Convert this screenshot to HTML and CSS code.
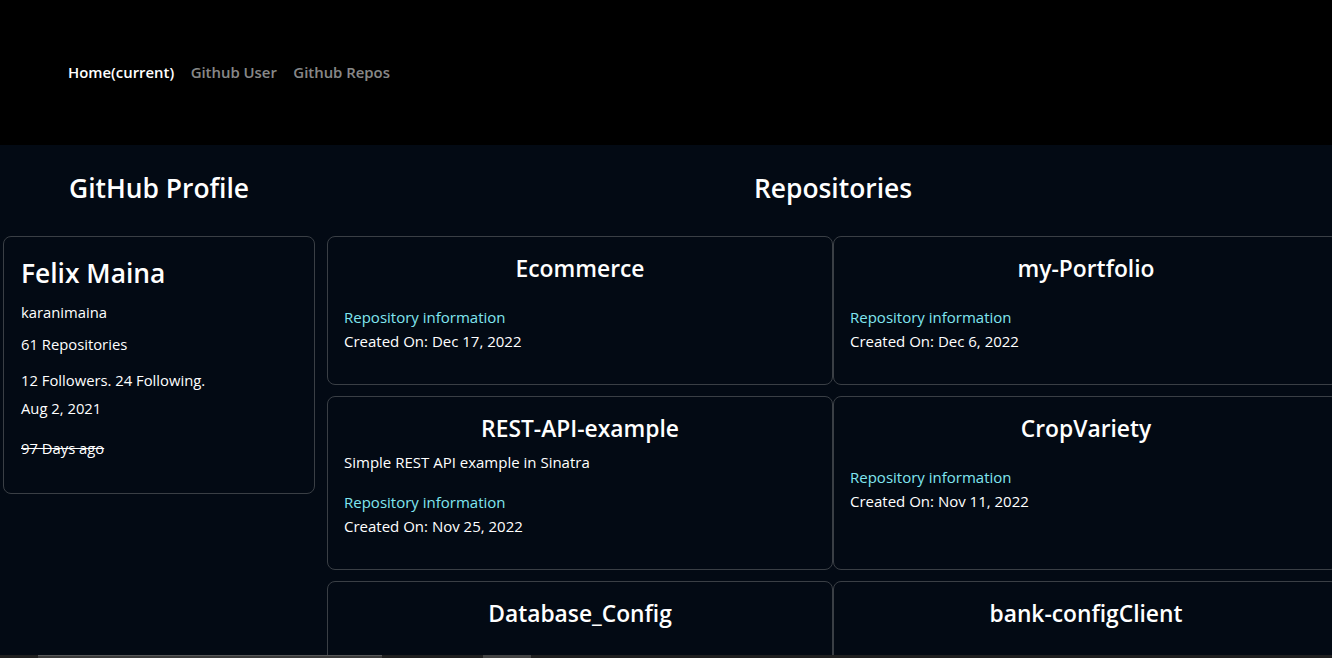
FILE: index.html
```html
<!DOCTYPE html>
<html lang="en">
<head>
<meta charset="utf-8">
<title>GitHub Profile</title>
<link rel="stylesheet" href="styles.css">
</head>
<body>
<header class="topbar">
  <nav class="nav">
    <a class="nav-link active" href="#">Home(current)</a>
    <a class="nav-link" href="#">Github User</a>
    <a class="nav-link" href="#">Github Repos</a>
  </nav>
</header>
<main class="content">
  <section class="profile-col">
    <h2 class="section-title">GitHub Profile</h2>
    <div class="card profile-card">
      <h3 class="name">Felix Maina</h3>
      <p class="p-line p-user">karanimaina</p>
      <p class="p-line p-repos">61 Repositories</p>
      <p class="p-line p-follow">12 Followers. 24 Following.</p>
      <p class="p-line p-date">Aug 2, 2021</p>
      <p class="p-line p-ago">97 Days ago</p>
    </div>
  </section>
  <section class="repos-col">
    <h2 class="section-title">Repositories</h2>
    <div class="repo-grid">
      <div class="card repo-card">
        <h3 class="repo-title">Ecommerce</h3>
        <p class="desc"></p>
        <a class="info" href="#">Repository information</a>
        <p class="created">Created On: Dec 17, 2022</p>
      </div>
      <div class="card repo-card">
        <h3 class="repo-title">my-Portfolio</h3>
        <p class="desc"></p>
        <a class="info" href="#">Repository information</a>
        <p class="created">Created On: Dec 6, 2022</p>
      </div>
      <div class="card repo-card">
        <h3 class="repo-title">REST-API-example</h3>
        <p class="desc">Simple REST API example in Sinatra</p>
        <a class="info" href="#">Repository information</a>
        <p class="created">Created On: Nov 25, 2022</p>
      </div>
      <div class="card repo-card">
        <h3 class="repo-title">CropVariety</h3>
        <p class="desc"></p>
        <a class="info" href="#">Repository information</a>
        <p class="created">Created On: Nov 11, 2022</p>
      </div>
      <div class="card repo-card repo-card-tall">
        <h3 class="repo-title">Database_Config</h3>
      </div>
      <div class="card repo-card repo-card-tall">
        <h3 class="repo-title">bank-configClient</h3>
      </div>
    </div>
  </section>
</main>
<div class="hscroll">
  <span class="thumb thumb-a"></span>
  <span class="thumb thumb-b"></span>
</div>
</body>
</html>
```

FILE: styles.css
```css
html, body {
  margin: 0;
  padding: 0;
  overflow: hidden;
}
body {
  background: #030a14;
  color: #ffffff;
  font-family: "Open Sans", "Noto Sans", sans-serif;
  font-size: 15px;
  width: 1360px;
  height: 658px;
}
p, h2, h3 { margin: 0; }

.topbar {
  background: #000000;
  height: 145px;
  box-sizing: border-box;
  display: flex;
  align-items: center;
  padding-left: 60px;
  padding-bottom: 2px;
}
.nav {
  display: flex;
}
.nav-link {
  color: rgba(255, 255, 255, 0.55);
  text-decoration: none;
  font-weight: 600;
  font-size: 14.9px;
  line-height: 24px;
  padding: 0 8.5px 0 8px;
}
.nav-link.active { color: #ffffff; }

.content {
  display: flex;
  padding-left: 3px;
  gap: 12px;
}
.profile-col { width: 312px; flex: none; }
.repos-col { width: 1012px; flex: none; }

.section-title {
  text-align: center;
  font-size: 26.4px;
  font-weight: 600;
  line-height: 34px;
  margin: 26px 0 31px;
}

.card {
  border: 1px solid #3a3f45;
  border-radius: 8px;
  box-sizing: border-box;
}

.profile-card {
  padding: 16px 17px 33px;
  display: flex;
  flex-direction: column;
}
.name {
  font-size: 26.4px;
  font-weight: 600;
  line-height: 40px;
}
.p-line { line-height: 24px; font-size: 14.8px; }
.p-user { margin-top: 7px; }
.p-repos { margin-top: 8px; }
.p-follow { margin-top: 12px; }
.p-date { margin-top: 4px; }
.p-ago { margin-top: 16px; text-decoration: line-through; }

.repo-grid {
  display: grid;
  grid-template-columns: 506px 506px;
  row-gap: 11px;
}
.repo-card {
  padding: 16px 16px 31px;
  display: flex;
  flex-direction: column;
  font-size: 15px;
  line-height: 24px;
}
.repo-card-tall { min-height: 120px; }
.repo-title {
  text-align: center;
  font-size: 22.8px;
  font-weight: 600;
  line-height: 32px;
  margin-bottom: 5px;
}
.desc { margin-bottom: 16px; }
.desc:empty { margin-bottom: 15px; }
.info {
  color: #80e6f0;
  text-decoration: none;
}

.hscroll {
  position: fixed;
  left: 0;
  right: 0;
  bottom: 0;
  height: 3px;
  background: #202020;
}
.thumb {
  position: absolute;
  top: 0;
  height: 3px;
}
.thumb-a {
  left: 38px;
  width: 344px;
  background: #3b3b3b;
  border-top: 1px solid #5a5a5a;
  box-sizing: border-box;
}
.thumb-b {
  left: 483px;
  width: 48px;
  background: #444444;
}
```
